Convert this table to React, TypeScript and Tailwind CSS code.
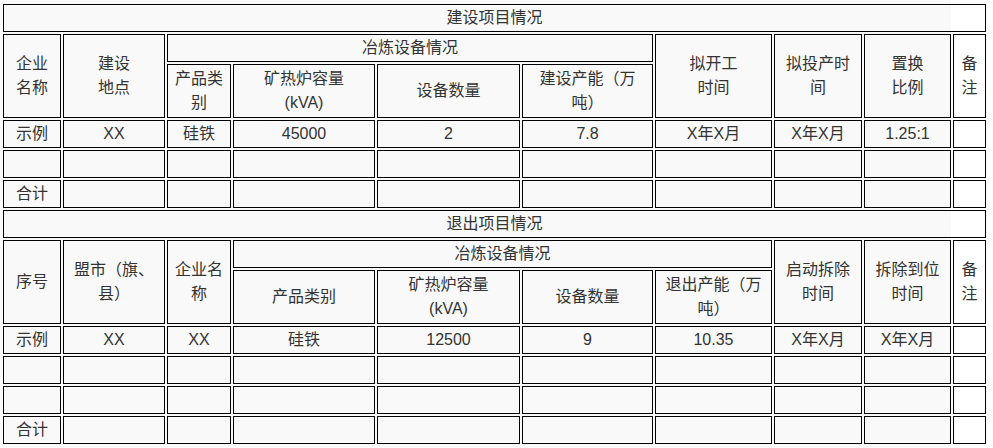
import React from 'react';

const cell = 'border border-black p-0 text-center align-middle font-normal';

const buildRows: string[][] = [
  ['示例', 'XX', '硅铁', '45000', '2', '7.8', 'X年X月', 'X年X月', '1.25:1', ''],
  ['', '', '', '', '', '', '', '', '', ''],
  ['合计', '', '', '', '', '', '', '', '', ''],
];

const exitRows: string[][] = [
  ['示例', 'XX', 'XX', '硅铁', '12500', '9', '10.35', 'X年X月', 'X年X月', ''],
  ['', '', '', '', '', '', '', '', '', ''],
  ['', '', '', '', '', '', '', '', '', ''],
  ['合计', '', '', '', '', '', '', '', '', ''],
];

const colWidths = [58, 102, 64, 142, 143, 131, 117, 88, 87, 33];

const Two = ({ a, b }: { a: string; b: string }) => (
  <>
    {a}
    <br />
    {b}
  </>
);

const DataRow = ({ values }: { values: string[] }) => (
  <tr className="h-[28px]">
    {values.map((v, i) => (
      <td key={i} className={cell}>
        {v}
      </td>
    ))}
  </tr>
);

export default function App() {
  return (
    <div
      className="min-h-screen w-[951px] bg-[#f9f9f9] pl-px pt-[2px] text-[16px] leading-6 text-[#333]"
      style={{ fontFamily: '"Liberation Sans", "Noto Sans CJK SC", sans-serif' }}
    >
      <table className="w-[987px] table-fixed border-separate border-spacing-[2px]">
        <colgroup>
          {colWidths.map((w, i) => (
            <col key={i} style={{ width: w + 'px' }} />
          ))}
        </colgroup>
        <tbody>
          {/* 建设项目 */}
          <tr className="h-[28px]">
            <td colSpan={10} className={cell}>建设项目情况</td>
          </tr>
          <tr className="h-[28px]">
            <td rowSpan={2} className={cell}><Two a="企业" b="名称" /></td>
            <td rowSpan={2} className={cell}><Two a="建设" b="地点" /></td>
            <td colSpan={4} className={cell}>冶炼设备情况</td>
            <td rowSpan={2} className={cell}><Two a="拟开工" b="时间" /></td>
            <td rowSpan={2} className={cell}><Two a="拟投产时" b="间" /></td>
            <td rowSpan={2} className={cell}><Two a="置换" b="比例" /></td>
            <td rowSpan={2} className={cell}><Two a="备" b="注" /></td>
          </tr>
          <tr className="h-[54px]">
            <td className={cell}><Two a="产品类" b="别" /></td>
            <td className={cell}><Two a="矿热炉容量" b="(kVA)" /></td>
            <td className={cell}>设备数量</td>
            <td className={cell}><Two a="建设产能（万" b="吨）" /></td>
          </tr>
          {buildRows.map((r, i) => (
            <DataRow key={'b' + i} values={r} />
          ))}

          {/* 退出项目 */}
          <tr className="h-[28px]">
            <td colSpan={10} className={cell}>退出项目情况</td>
          </tr>
          <tr className="h-[28px]">
            <td rowSpan={2} className={cell}>序号</td>
            <td rowSpan={2} className={cell}><Two a="盟市（旗、" b="县）" /></td>
            <td rowSpan={2} className={cell}><Two a="企业名" b="称" /></td>
            <td colSpan={4} className={cell}>冶炼设备情况</td>
            <td rowSpan={2} className={cell}><Two a="启动拆除" b="时间" /></td>
            <td rowSpan={2} className={cell}><Two a="拆除到位" b="时间" /></td>
            <td rowSpan={2} className={cell}><Two a="备" b="注" /></td>
          </tr>
          <tr className="h-[54px]">
            <td className={cell}>产品类别</td>
            <td className={cell}><Two a="矿热炉容量" b="(kVA)" /></td>
            <td className={cell}>设备数量</td>
            <td className={cell}><Two a="退出产能（万" b="吨）" /></td>
          </tr>
          {exitRows.map((r, i) => (
            <DataRow key={'e' + i} values={r} />
          ))}
        </tbody>
      </table>
    </div>
  );
}
